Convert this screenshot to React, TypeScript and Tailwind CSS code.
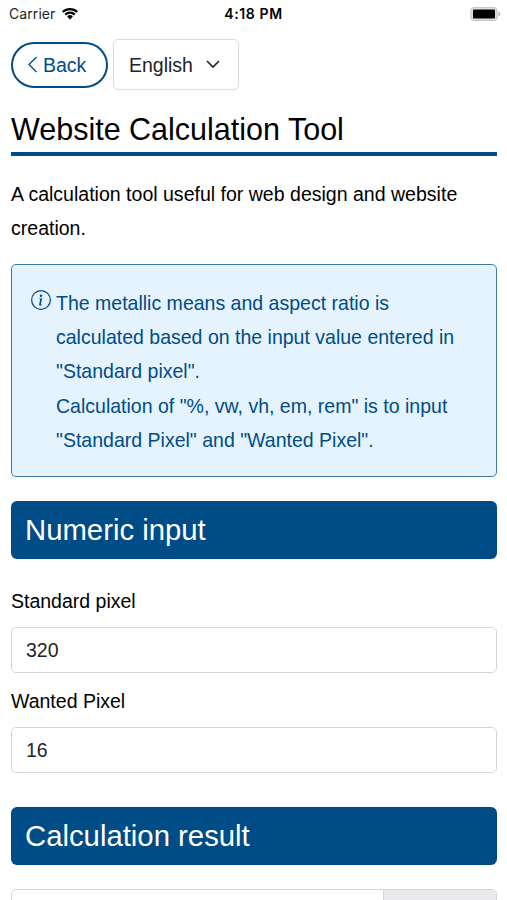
import React from "react";

function WifiIcon() {
  return (
    <svg className="ml-[6px]" width="18" height="13" viewBox="0 0 18 14">
      <path d="M0.4 4.6a12.2 12.2 0 0 1 17.2 0l-1.6 1.7a9.9 9.9 0 0 0-14 0z" />
      <path d="M3.1 7.4a8.3 8.3 0 0 1 11.8 0l-1.7 1.7a6 6 0 0 0-8.4 0z" />
      <path d="M5.9 10.2a4.4 4.4 0 0 1 6.2 0L9 13.4z" />
    </svg>
  );
}

function StatusBar() {
  return (
    <div className="grid h-[27px] grid-cols-3 items-center text-[14px] text-black">
      <div className="flex items-center pl-[9px]">
        <span className="font-['Inter',sans-serif] text-[#222] tracking-[0.08px]">Carrier</span>
        <WifiIcon />
      </div>
      <span className="text-center font-['Inter',sans-serif] font-semibold tracking-[0.6px]">4:18 PM</span>
      <div className="flex justify-end pr-[6px]">
        <svg width="31" height="14" viewBox="0 0 31 14">
          <rect x="0.75" y="0.5" width="26.5" height="13" rx="3.5" fill="#ddd" stroke="#c4c4c4" />
          <rect x="3" y="2.5" width="22" height="9" rx="1" />
          <path d="M28.500 4.500c2.500.9 2.500 4.100 0 5z" fill="#b5b5b5" />
        </svg>
      </div>
    </div>
  );
}

function SectionTitle({ children }: { children: React.ReactNode }) {
  return (
    <h2 className="flex h-[58px] items-center rounded-[6px] bg-[#004c86] px-[14px] pb-px text-[29.3px] text-white">
      {children}
    </h2>
  );
}

function Field({ label, value }: { label: string; value: string }) {
  return (
    <div className="h-[100px]">
      <label className="block h-[40px] text-[19.5px] leading-[28px] text-black">{label}</label>
      <input
        className="block h-[46px] w-full rounded-[5px] border border-[#d3d6da] px-[14px] pt-px text-[19.5px] text-[#212529]"
        defaultValue={value}
      />
    </div>
  );
}

export default function App() {
  return (
    <div className="h-[900px] overflow-hidden bg-white font-['Liberation_Sans',sans-serif]">
      <StatusBar />
      <main className="pl-[11px] pr-[10px] pt-[12px]">
        <div className="flex h-[51px] items-center gap-[5px]">
          <button className="flex h-[46px] w-[97px] items-center rounded-full border-2 border-[#004c86] pl-[14px] text-[19.5px] text-[#004c86]">
            <svg className="mr-[5px]" width="11" height="17" viewBox="0 0 11 17" fill="none" stroke="currentColor" strokeWidth="1.3">
              <path d="M9.500 1 2 8.500l7.500 7.500" />
            </svg>
            <span className="pt-[2px]">Back</span>
          </button>
          <button className="flex h-[51px] w-[126px] items-center justify-between rounded-[5px] border border-[#d9dcdf] pl-[15px] pr-[18px] text-[19.5px] text-[#212529]">
            <span className="pt-[2px]">English</span>
            <svg width="14" height="9" viewBox="0 0 14 9" fill="none" stroke="currentColor" strokeWidth="1.6">
              <path d="m1 1 6 6 6-6" />
            </svg>
          </button>
        </div>
        <h1 className="mt-[19px] h-[47px] border-b-4 border-[#004c86] text-[30.5px] leading-[40px] text-black">
          Website Calculation Tool
        </h1>
        <p className="mt-[21px] text-[19.55px] leading-[34px] text-black">
          A calculation tool useful for web design and website
          <br />
          creation.
        </p>
        <div className="mt-[19px] flex h-[213px] rounded-[5px] border border-[#3c79a6] bg-[#e5f3ff] pl-[19px] pt-[21px] text-[19.53px] leading-[34.2px] text-[#004c86]">
          <svg className="mr-[5px] mt-[4px] shrink-0" width="20" height="20" viewBox="0 0 16 16" fill="currentColor">
            <path d="M8 15A7 7 0 1 1 8 1a7 7 0 0 1 0 14m0 1A8 8 0 1 0 8 0a8 8 0 0 0 0 16" />
            <path d="m8.930 6.588-2.290.287-.082.380.450.083c.294.070.352.176.288.469l-.738 3.468c-.194.897.105 1.319.808 1.319.545 0 1.178-.252 1.465-.598l.088-.416c-.200.176-.492.246-.686.246-.275 0-.375-.193-.304-.533zM9 4.500a1 1 0 1 1-2 0 1 1 0 0 1 2 0" />
          </svg>
          <p className="whitespace-nowrap">
            The metallic means and aspect ratio is
            <br />
            calculated based on the input value entered in
            <br />
            "Standard pixel".
            <br />
            Calculation of "%, vw, vh, em, rem" is to input
            <br />
            "Standard Pixel" and "Wanted Pixel".
          </p>
        </div>
        <div className="mt-[24px]">
          <SectionTitle>Numeric input</SectionTitle>
        </div>
        <div className="mt-[28px]">
          <Field label="Standard pixel" value="320" />
          <Field label="Wanted Pixel" value="16" />
        </div>
        <div className="mt-[20px]">
          <SectionTitle>Calculation result</SectionTitle>
        </div>
        <div className="mt-[24px] flex h-[46px] overflow-hidden rounded-[5px] border border-[#d3d6da]">
          <div className="flex-1" />
          <div className="w-[113px] border-l border-[#d3d6da] bg-[#e9e9ed]" />
        </div>
      </main>
    </div>
  );
}
